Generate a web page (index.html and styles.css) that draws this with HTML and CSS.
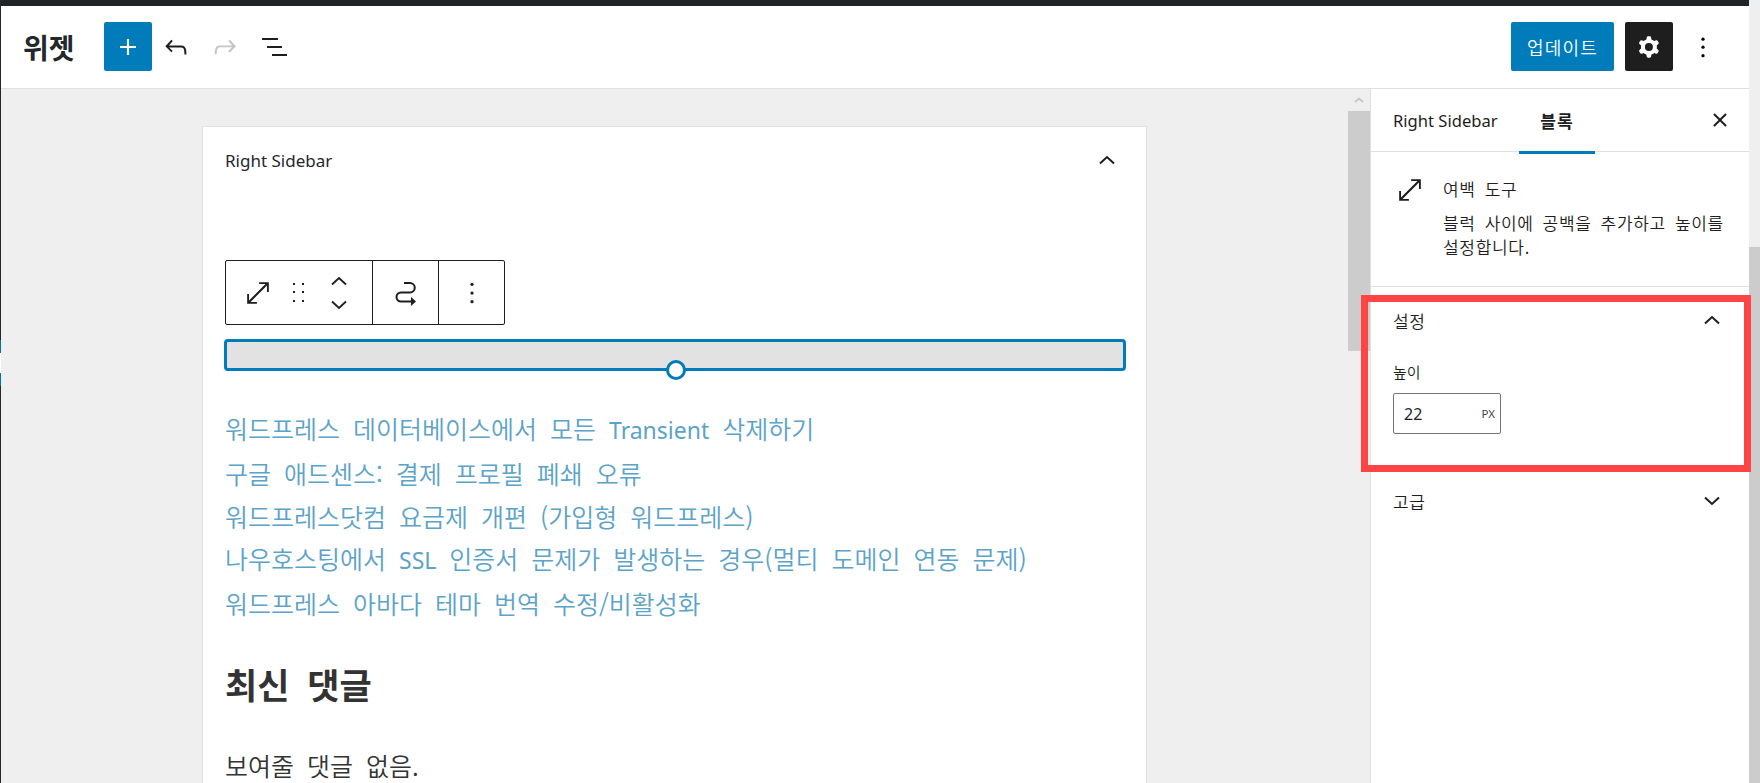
FILE: index.html
```html
<!DOCTYPE html>
<html lang="ko">
<head>
<meta charset="utf-8">
<title>위젯</title>
<link rel="stylesheet" href="styles.css">
</head>
<body>
<div class="app">
  <div class="admin-strip">
    <div class="strip-dark strip-top"></div>
    <div class="strip-blue"></div>
    <div class="strip-white"></div>
    <div class="strip-blue"></div>
    <div class="strip-dark strip-fill"></div>
  </div>
  <div class="main">
    <div class="topbar"></div>
    <header class="header">
      <h1 class="title">위젯</h1>
      <button class="btn-add"><svg class="ico ico-lg" viewBox="0 0 24 24"><path fill="#fff" d="M18 11.200h-5.200V6h-1.600v5.200H6v1.600h5.200V18h1.600v-5.200H18z"/></svg></button>
      <button class="btn-icon"><svg class="ico ico-lg" viewBox="0 0 24 24"><path d="M18.300 11.700c-.6-.6-1.400-.9-2.300-.9H6.700l2.900-3.300-1.100-1-4.500 5L8.500 16l1-1-2.700-2.700H16c.5 0 .9.2 1.300.5 1 1 1 3.400 1 4.500v.3h1.500v-.2c0-1.500 0-4.300-1.500-5.700z"/></svg></button>
      <button class="btn-icon disabled"><svg class="ico ico-lg" viewBox="0 0 24 24"><path d="M15.600 6.500l-1.100 1 2.900 3.300H8c-.9 0-1.700.3-2.300.9-1.400 1.500-1.400 4.200-1.400 5.600v.2h1.500v-.3c0-1.100 0-3.500 1-4.500.3-.3.7-.5 1.300-.5h9.200L14.500 15l1.100 1.100 4.600-4.600-4.600-5z"/></svg></button>
      <button class="btn-icon"><svg class="ico ico-list" viewBox="0 0 26 26"><path d="M1 4h16v2H1zM6 12h15v2H6zM11 20h15v2H11z"/></svg></button>
      <div class="header-spacer"></div>
      <button class="btn-update">업데이트</button>
      <button class="btn-settings"><svg class="ico ico-lg" viewBox="0 0 24 24"><path fill="#fff" fill-rule="evenodd" d="M10.289 4.836A1 1 0 0111.275 4h1.306a1 1 0 01.987.836l.244 1.466c.787.26 1.503.679 2.108 1.218l1.393-.522a1 1 0 011.216.437l.653 1.130a1 1 0 01-.23 1.273l-1.148.944a6.025 6.025 0 010 2.435l1.149.946a1 1 0 01.23 1.272l-.653 1.130a1 1 0 01-1.216.437l-1.394-.522c-.605.54-1.320.958-2.108 1.218l-.244 1.466a1 1 0 01-.987.836h-1.306a1 1 0 01-.986-.836l-.244-1.466a5.995 5.995 0 01-2.108-1.218l-1.394.522a1 1 0 01-1.217-.436l-.653-1.131a1 1 0 01.23-1.272l1.149-.946a6.026 6.026 0 010-2.435l-1.148-.944a1 1 0 01-.23-1.272l.653-1.131a1 1 0 011.217-.437l1.393.522a5.994 5.994 0 012.108-1.218l.244-1.466zM14.929 12a3 3 0 11-6 0 3 3 0 016 0z"/></svg></button>
      <button class="btn-more"><svg class="ico" viewBox="0 0 24 24"><circle cx="12" cy="4.800" r="1.500"/><circle cx="12" cy="12.200" r="1.500"/><circle cx="12" cy="20" r="1.500"/></svg></button>
    </header>
    <div class="workspace">
      <div class="canvas">
        <section class="card">
          <div class="card-head">
            <span class="card-title">Right Sidebar</span>
            <svg class="chev" viewBox="0 0 16 10"><path d="M1 8.500 8 2l7 6.500"/></svg>
          </div>
          <div class="toolbar">
            <div class="tb-group tb-first">
              <div class="tb-cell tb-resize"><svg class="ico" viewBox="0 0 24 24"><path d="M13 2v1.700h5.900L3.700 18.900V13H2v9h9v-1.700H5.100L20.300 5.100V11H22V2z"/></svg></div>
              <div class="tb-cell tb-drag"><svg class="drag" viewBox="0 0 12 21"><path d="M1 1h2v2H1zM10 1h2v2h-2zM1 9h2v2H1zM10 9h2v2h-2zM1 18h2v2H1zM10 18h2v2h-2z"/></svg></div>
              <div class="tb-cell tb-mover">
                <svg class="mini-chev" viewBox="0 0 16 10"><path d="M1 8.500 8 2l7 6.500"/></svg>
                <svg class="mini-chev" viewBox="0 0 16 10"><path d="M1 1.500 8 8l7-6.500"/></svg>
              </div>
            </div>
            <div class="tb-group tb-mid"><svg class="ico loop" viewBox="0 0 26 26"><path d="M11 3h6a4.500 4.500 0 0 1 0 9.500H8a4.500 4.500 0 0 0 0 9H18"/><path class="arrow" d="M18 17l5 4.500-5 4.500z"/></svg></div>
            <div class="tb-group tb-last"><svg class="ico" viewBox="0 0 24 24"><circle cx="12" cy="4" r="1.500"/><circle cx="12" cy="12" r="1.500"/><circle cx="12" cy="20" r="1.500"/></svg></div>
          </div>
          <div class="spacer-block"><span class="spacer-handle"></span></div>
          <ul class="links">
            <li>워드프레스 데이터베이스에서 모든 <span class="latin">Transient</span> 삭제하기</li>
            <li>구글 애드센스: 결제 프로필 폐쇄 오류</li>
            <li>워드프레스닷컴 요금제 개편 (가입형 워드프레스)</li>
            <li>나우호스팅에서 <span class="latin">SSL</span> 인증서 문제가 발생하는 경우(멀티 도메인 연동 문제)</li>
            <li>워드프레스 아바다 테마 번역 수정/비활성화</li>
          </ul>
          <h2 class="card-heading">최신 댓글</h2>
          <p class="card-text">보여줄 댓글 없음.</p>
        </section>
      </div>
      <div class="editor-scroll"><svg class="scroll-arrow" viewBox="0 0 10 6"><path d="M1 5 5 1.500 9 5"/></svg><div class="editor-thumb"></div></div>
      <aside class="sidebar">
        <div class="tabs">
          <span class="tab">Right Sidebar</span>
          <span class="tab-active">블록</span>
          <svg class="close" viewBox="0 0 14 14"><path d="M1 1l12 12M13 1 1 13"/></svg>
        </div>
        <div class="block-card">
          <svg class="ico block-ico" viewBox="0 0 24 24"><path d="M13 2v1.700h5.900L3.700 18.900V13H2v9h9v-1.700H5.100L20.300 5.100V11H22V2z"/></svg>
          <div class="block-info">
            <div class="block-name">여백 도구</div>
            <div class="block-desc">블럭 사이에 공백을 추가하고 높이를 설정합니다.</div>
          </div>
        </div>
        <div class="panel panel-open">
          <div class="panel-head"><span>설정</span><svg class="chev" viewBox="0 0 16 10"><path d="M1 8.500 8 2l7 6.500"/></svg></div>
          <label class="field-label">높이</label>
          <div class="unit-input"><span class="unit-value">22</span><span class="unit-name">PX</span></div>
        </div>
        <div class="panel">
          <div class="panel-head"><span>고급</span><svg class="chev" viewBox="0 0 16 10"><path d="M1 1.500 8 8l7-6.500"/></svg></div>
        </div>
      </aside>
    </div>
  </div>
  <div class="page-scroll"><div class="page-thumb"></div></div>
  <div class="annotation"></div>
</div>
</body>
</html>
```

FILE: styles.css
```css
* { box-sizing: border-box; }
html, body { margin: 0; height: 100%; overflow: hidden; background: #fff; }
body { font-family: "Noto Sans", "Noto Sans CJK KR", sans-serif; color: #1e1e1e; }
button { border: 0; padding: 0; background: none; font: inherit; display: flex; align-items: center; justify-content: center; }
.app { position: relative; display: flex; width: 1760px; height: 783px; overflow: hidden; }

.admin-strip { width: 1px; display: flex; flex-direction: column; }
.strip-dark { background: #23282d; }
.strip-top { height: 340px; }
.strip-blue { height: 13px; background: #0073aa; }
.strip-white { height: 20px; background: #fff; }
.strip-fill { flex: 1; }

.main { flex: 1; min-width: 0; display: flex; flex-direction: column; }
.topbar { height: 6px; background: #1d2327; }
.header { height: 83px; display: flex; align-items: center; border-bottom: 1px solid #e0e0e0; padding-left: 22px; padding-bottom: 1px; background: #fff; }
.title { margin: 0 29px 0 0; width: 52px; font: 700 28px "Noto Sans CJK KR", sans-serif; color: #23282d; white-space: nowrap; }
.ico { width: 26px; height: 26px; display: block; fill: currentColor; }
.ico-lg { width: 32px; height: 32px; flex: none; }
.ico-list { margin-left: 1px; }
.btn-add { width: 48px; height: 49px; background: #007cba; border-radius: 2px; }
.btn-icon { width: 48.500px; height: 48px; color: #1e1e1e; }
.btn-icon.disabled { color: #c4c4c4; }
.header-spacer { flex: 1; }
.btn-update { width: 103px; height: 49px; background: #007cba; color: #fff; border-radius: 2px; font: 350 18px "Noto Sans CJK KR", sans-serif; letter-spacing: 1.200px; }
.btn-settings { width: 48px; height: 49px; margin-left: 11px; background: #1e1e1e; border-radius: 2px; }
.btn-more { width: 48px; height: 48px; margin: 0 22px 0 6px; }

.workspace { flex: 1; min-height: 0; display: flex; }
.canvas { flex: 1; min-width: 0; background: #efefef; padding: 37px 0 0 201px; overflow: hidden; }
.card { width: 945px; min-height: 700px; background: #fff; border: 1px solid #e0e0e0; padding: 0 22px; }
.card-head { height: 68px; padding-bottom: 2px; display: flex; align-items: center; justify-content: space-between; }
.card-title { font-size: 17px; color: #23282d; }
.chev { width: 16px; height: 10px; fill: none; stroke: #1e1e1e; stroke-width: 2; margin-right: 7px; }
.card-head .chev { margin-right: 9px; margin-top: 0; }

.toolbar { margin-top: 65px; width: 280px; height: 65px; display: flex; border: 1px solid #1e1e1e; border-radius: 2px; }
.tb-group { display: flex; align-items: center; justify-content: center; border-right: 1px solid #1e1e1e; }
.tb-first { width: 147px; }
.tb-mid { width: 66px; }
.tb-last { width: 65px; border-right: 0; }
.tb-cell { display: flex; align-items: center; justify-content: center; }
.tb-resize { width: 64px; }
.tb-drag { width: 16px; }
.tb-mover { width: 66px; flex-direction: column; gap: 14px; }
.drag { width: 12px; height: 21px; fill: #1e1e1e; }
.mini-chev { width: 16px; height: 10px; fill: none; stroke: #1e1e1e; stroke-width: 1.800; }
.loop { fill: none; stroke: #1e1e1e; stroke-width: 2; }
.loop .arrow { fill: #1e1e1e; stroke: none; }

.spacer-block { position: relative; margin: 14px 0 0 -1px; width: 902px; height: 32px; background: #e2e2e2; border: 3px solid #007cba; border-radius: 4px; }
.spacer-handle { position: absolute; left: 439px; bottom: -12px; width: 20px; height: 20px; background: #fff; border: 3px solid #007cba; border-radius: 50%; }

.links { list-style: none; margin: 36px 0 0; padding: 0; font: 350 25px/42.800px "Noto Sans CJK KR", sans-serif; word-spacing: 6px; color: #5ba3c9; white-space: nowrap; }
.latin { font-family: "Noto Sans", sans-serif; font-size: 23px; font-weight: 400; }
.card-heading { margin: 29px 0 0; font: 700 35px/60px "Noto Sans CJK KR", sans-serif; word-spacing: 8px; color: #333; }
.card-text { margin: 36px 0 0; font: 350 25px/30px "Noto Sans CJK KR", sans-serif; word-spacing: 6px; color: #333; }

.editor-scroll { position: relative; width: 22px; background: #efefef; }
.scroll-arrow { position: absolute; left: 6px; top: 8px; width: 10px; height: 6px; fill: none; stroke: #c8c8c8; stroke-width: 2; }
.editor-thumb { position: absolute; top: 22px; left: 0; width: 22px; height: 240px; background: #ccc; }

.sidebar { width: 379px; border-left: 1px solid #e0e0e0; background: #fff; display: flex; flex-direction: column; }
.tabs { position: relative; height: 63px; display: flex; align-items: center; border-bottom: 1px solid #e0e0e0; padding: 0 0 0 22px; }
.tab { width: 126px; font-size: 16.600px; white-space: nowrap; }
.tab-active { position: relative; width: 76px; height: 100%; display: flex; align-items: center; justify-content: center; font: 700 17px "Noto Sans CJK KR", sans-serif; letter-spacing: 1px; }
.tab-active::after { content: ""; position: absolute; left: 0; right: 0; bottom: -3px; height: 3px; background: #007cba; }
.close { position: absolute; left: 342px; top: 24px; width: 14px; height: 14px; fill: none; stroke: #1e1e1e; stroke-width: 2; }

.block-card { height: 135px; display: flex; padding: 25px 20px 0 26px; border-bottom: 1px solid #e0e0e0; }
.block-ico { flex: none; width: 26px; height: 26px; color: #1e1e1e; }
.block-info { margin-left: 20px; font: 350 17px/24px "Noto Sans CJK KR", sans-serif; letter-spacing: .7px; word-spacing: 3.500px; word-break: keep-all; }
.block-name { margin-bottom: 10px; }

.panel { padding: 0 22px; }
.panel-open { height: 181px; }
.panel-head { height: 66px; display: flex; align-items: center; justify-content: space-between; font: 350 17px "Noto Sans CJK KR", sans-serif; letter-spacing: .7px; }
.field-label { display: block; margin-top: 9px; font: 350 15px/20px "Noto Sans CJK KR", sans-serif; }
.unit-input { margin-top: 11px; width: 108px; height: 41px; display: flex; align-items: center; justify-content: space-between; padding: 0 5px 0 10px; border: 1px solid #757575; border-radius: 2px; }
.unit-value { font-size: 16px; }
.unit-name { font-size: 11.500px; color: #444; }

.page-scroll { width: 11px; background: #efefef; position: relative; }
.page-thumb { position: absolute; left: 0; right: 0; top: 247px; bottom: 0; background: #ccc; }
.annotation { position: absolute; left: 1361px; top: 295px; width: 390px; height: 177px; border: 7px solid #ff4444; pointer-events: none; }
```
